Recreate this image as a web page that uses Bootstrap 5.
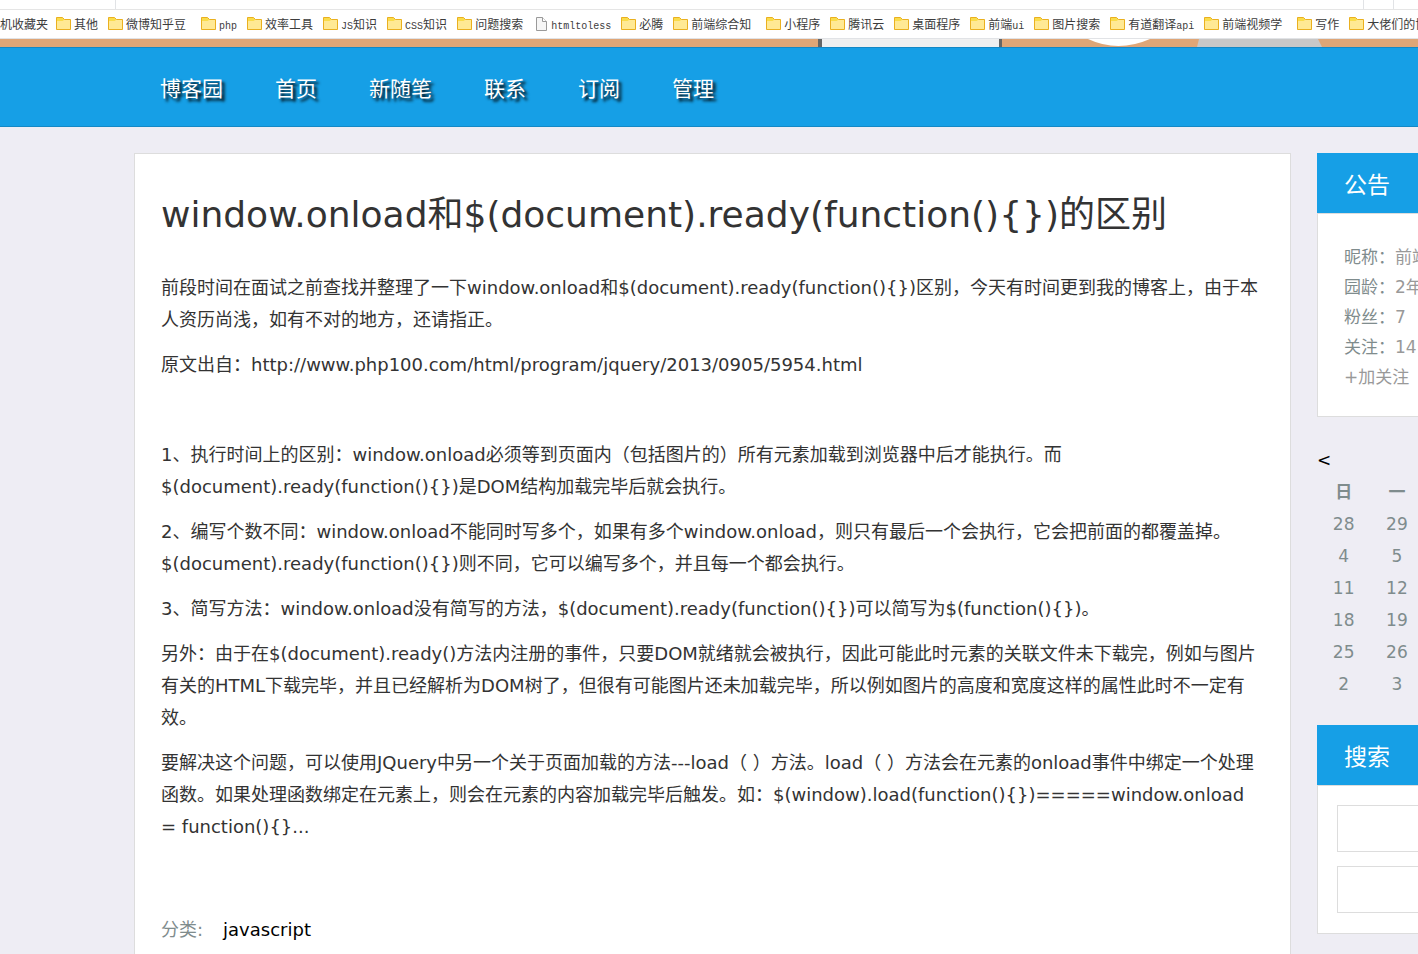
<!DOCTYPE html>
<html lang="zh-CN">
<head>
<meta charset="utf-8">
<meta name="viewport" content="width=device-width, initial-scale=1">
<title>window.onload和$(document).ready(function(){})的区别</title>
<link href="https://cdn.jsdelivr.net/npm/bootstrap@5.3.0/dist/css/bootstrap.min.css" rel="stylesheet">
<style>
body{font-family:"DejaVu Sans","Noto Sans CJK SC",sans-serif;font-size:18px;line-height:32px;color:#333;background:#eeedf4;text-spacing-trim:space-all}
a{text-decoration:none;color:inherit}
.tab-strip{height:10px;border-bottom:1px solid #e5e5e5}
.tab-strip span{border-right:1px solid #e1e3e6}
.tab-a{width:116px}.tab-b{width:31px;border-left:1px solid #e1e3e6}
.marks-bar{height:29px;gap:10px;border-bottom:1px solid #e1e3e6;font-family:"Noto Sans CJK SC",sans-serif;font-size:12px;line-height:28px;color:#3c3c3c}
.marks-bar a{display:flex;align-items:center;flex:none;gap:2px;white-space:nowrap}
.marks-bar .cut{padding-right:5px}
.marks-bar .first{width:46px}
.marks-bar svg{width:16px;height:14px;flex:none}
.marks-bar i{font:10px/20px "Liberation Mono",monospace}
.banner{height:8px;background:#dfa677}
.site-nav{height:80px;padding:4px 0 0 160px;gap:52px;background:#169fe6;border-top:1px solid #1488c5;border-bottom:1px solid #1488c5;font-size:21px;color:#fff;text-shadow:3px 3px 3px #000}
.page-row{padding:26px 0 0 134px;gap:26px}
.post{background:#fff;border:1px solid #ddd;border-bottom:0;padding:37px 26px 0;min-width:0}
.post h1{font-size:36px;line-height:48px;font-weight:400;margin:0 0 33px}
.post p{margin:0 0 13px}
.post-foot{margin-top:71px;gap:20px}
.muted{color:#7f8c8d}
.side{flex:0 0 101px;min-width:0}
.side-in{width:373px}
.panel-head{background:#169fe6;color:#fff;font-size:23px;line-height:32px;padding:16px 27px 12px;margin:0;font-weight:400}
.panel-body{background:#fff;border:1px solid #ddd}
.notice{padding:28px 26px 24px;font-size:17px;line-height:30px;color:#999}
.cal{margin:27px 0 25px;font-size:17px;color:#7f8c8d;text-align:center;table-layout:fixed;width:100%}
.cal th,.cal td{padding:0;height:32px;font-weight:400}
.cal th{font-weight:700}
.cal caption{caption-side:top;padding:0;color:#000;text-align:left;line-height:32px}
.search{padding:19px 19px 20px;display:grid;gap:14px}
.search input{height:47px;border:1px solid #ddd;background:#fff;width:100%;padding:0 12px;border-radius:0}
</style>
</head>
<body>
<svg width="0" height="0" class="position-absolute" aria-hidden="true">
<symbol id="dir" viewBox="0 0 16 14"><path d="M.5 12.5V.5h6l2 2h6v10z" fill="#f9dc4b" stroke="#eab020"/><path d="M1 4h5.500L8 3h6v9H1z" fill="#ffe994"/></symbol>
<symbol id="doc" viewBox="0 0 16 14"><path d="M3.500.5h6l4 4v9h-10z" fill="#f6f6f6" stroke="#9a9a9a"/><path d="M9.500.5v4h4" fill="#fff" stroke="#9a9a9a"/></symbol>
</svg>
<div class="vh-100 overflow-hidden d-flex flex-column">
<div class="tab-strip bg-white d-flex justify-content-between flex-shrink-0"><span class="tab-a"></span><span class="tab-b me-4"></span></div>
<nav class="marks-bar bg-white d-flex flex-shrink-0" aria-label="书签">
<a href="#" class="first">机收藏夹</a>
<a href="#"><svg><use href="#dir"/></svg>其他</a>
<a href="#" class="cut"><svg><use href="#dir"/></svg>微博知乎豆</a>
<a href="#"><svg><use href="#dir"/></svg><span><i>php</i></span></a>
<a href="#"><svg><use href="#dir"/></svg>效率工具</a>
<a href="#"><svg><use href="#dir"/></svg><span><i>JS</i>知识</span></a>
<a href="#"><svg><use href="#dir"/></svg><span><i>CSS</i>知识</span></a>
<a href="#"><svg><use href="#dir"/></svg>问题搜索</a>
<a href="#"><svg><use href="#doc"/></svg><span><i>htmltoless</i></span></a>
<a href="#"><svg><use href="#dir"/></svg>必腾</a>
<a href="#" class="cut"><svg><use href="#dir"/></svg>前端综合知</a>
<a href="#"><svg><use href="#dir"/></svg>小程序</a>
<a href="#"><svg><use href="#dir"/></svg>腾讯云</a>
<a href="#"><svg><use href="#dir"/></svg>桌面程序</a>
<a href="#"><svg><use href="#dir"/></svg><span>前端<i>ui</i></span></a>
<a href="#"><svg><use href="#dir"/></svg>图片搜索</a>
<a href="#"><svg><use href="#dir"/></svg><span>有道翻译<i>api</i></span></a>
<a href="#" class="cut"><svg><use href="#dir"/></svg>前端视频学</a>
<a href="#"><svg><use href="#dir"/></svg>写作</a>
<a href="#"><svg><use href="#dir"/></svg>大佬们的博</a>
</nav>
<svg class="banner w-100 flex-shrink-0 d-block" viewBox="0 0 1418 8" preserveAspectRatio="xMidYMin slice" aria-hidden="true"><path d="M818 0h184v8H818z" fill="#666"/><path d="M822 0h177v8H822z" fill="#f0f0f0"/><path d="M1088 0q30 14 62 0z" fill="#fff"/><path d="M1199 0h119l4 8h-125z" fill="#c8c8c8"/></svg>
<nav class="site-nav d-flex align-items-center flex-shrink-0" aria-label="导航">
<a href="#">博客园</a><a href="#">首页</a><a href="#">新随笔</a><a href="#">联系</a><a href="#">订阅</a><a href="#">管理</a>
</nav>
<div class="page-row d-flex flex-grow-1">
<main class="post flex-grow-1">
<h1>window.onload和$(document).ready(function(){})的区别</h1>
<p>前段时间在面试之前查找并整理了一下window.onload和$(document).ready(function(){})区别，今天有时间更到我的博客上，由于本人资历尚浅，如有不对的地方，还请指正。</p>
<p>原文出自：http://www.php100.com/html/program/jquery/2013/0905/5954.html</p>
<p>&nbsp;</p>
<p>1、执行时间上的区别：window.onload必须等到页面内（包括图片的）所有元素加载到浏览器中后才能执行。而$(document).ready(function(){})是DOM结构加载完毕后就会执行。</p>
<p>2、编写个数不同：window.onload不能同时写多个，如果有多个window.onload，则只有最后一个会执行，它会把前面的都覆盖掉。$(document).ready(function(){})则不同，它可以编写多个，并且每一个都会执行。</p>
<p>3、简写方法：window.onload没有简写的方法，$(document).ready(function(){})可以简写为$(function(){})。</p>
<p>另外：由于在$(document).ready()方法内注册的事件，只要DOM就绪就会被执行，因此可能此时元素的关联文件未下载完，例如与图片有关的HTML下载完毕，并且已经解析为DOM树了，但很有可能图片还未加载完毕，所以例如图片的高度和宽度这样的属性此时不一定有效。</p>
<p>要解决这个问题，可以使用JQuery中另一个关于页面加载的方法---load（ ）方法。load（ ）方法会在元素的onload事件中绑定一个处理函数。如果处理函数绑定在元素上，则会在元素的内容加载完毕后触发。如：$(window).load(function(){})=====window.onload = function(){}...</p>
<div class="post-foot d-flex"><span class="muted">分类:</span><a href="#" class="text-black">javascript</a></div>
</main>
<aside class="side"><div class="side-in">
<h2 class="panel-head">公告</h2>
<div class="panel-body notice">
<div><span class="muted">昵称：</span><a href="#">前端</a></div>
<div><span class="muted">园龄：</span><a href="#">2年</a></div>
<div><span class="muted">粉丝：</span><a href="#">7</a></div>
<div><span class="muted">关注：</span><a href="#">14</a></div>
<a href="#">+加关注</a>
</div>
<table class="cal">
<caption><a href="#">&lt;</a></caption>
<thead><tr><th>日</th><th>一</th><th></th><th></th><th></th><th></th><th></th></tr></thead>
<tbody>
<tr><td>28</td><td>29</td><td colspan="5"></td></tr>
<tr><td>4</td><td>5</td><td colspan="5"></td></tr>
<tr><td>11</td><td>12</td><td colspan="5"></td></tr>
<tr><td>18</td><td>19</td><td colspan="5"></td></tr>
<tr><td>25</td><td>26</td><td colspan="5"></td></tr>
<tr><td>2</td><td>3</td><td colspan="5"></td></tr>
</tbody>
</table>
<h2 class="panel-head">搜索</h2>
<form class="panel-body search"><input type="text" aria-label="找找看"><input type="text" aria-label="谷歌搜索"></form>
</div></aside>
</div>
</div>
<script src="https://cdn.jsdelivr.net/npm/bootstrap@5.3.0/dist/js/bootstrap.bundle.min.js"></script>
</body>
</html>
